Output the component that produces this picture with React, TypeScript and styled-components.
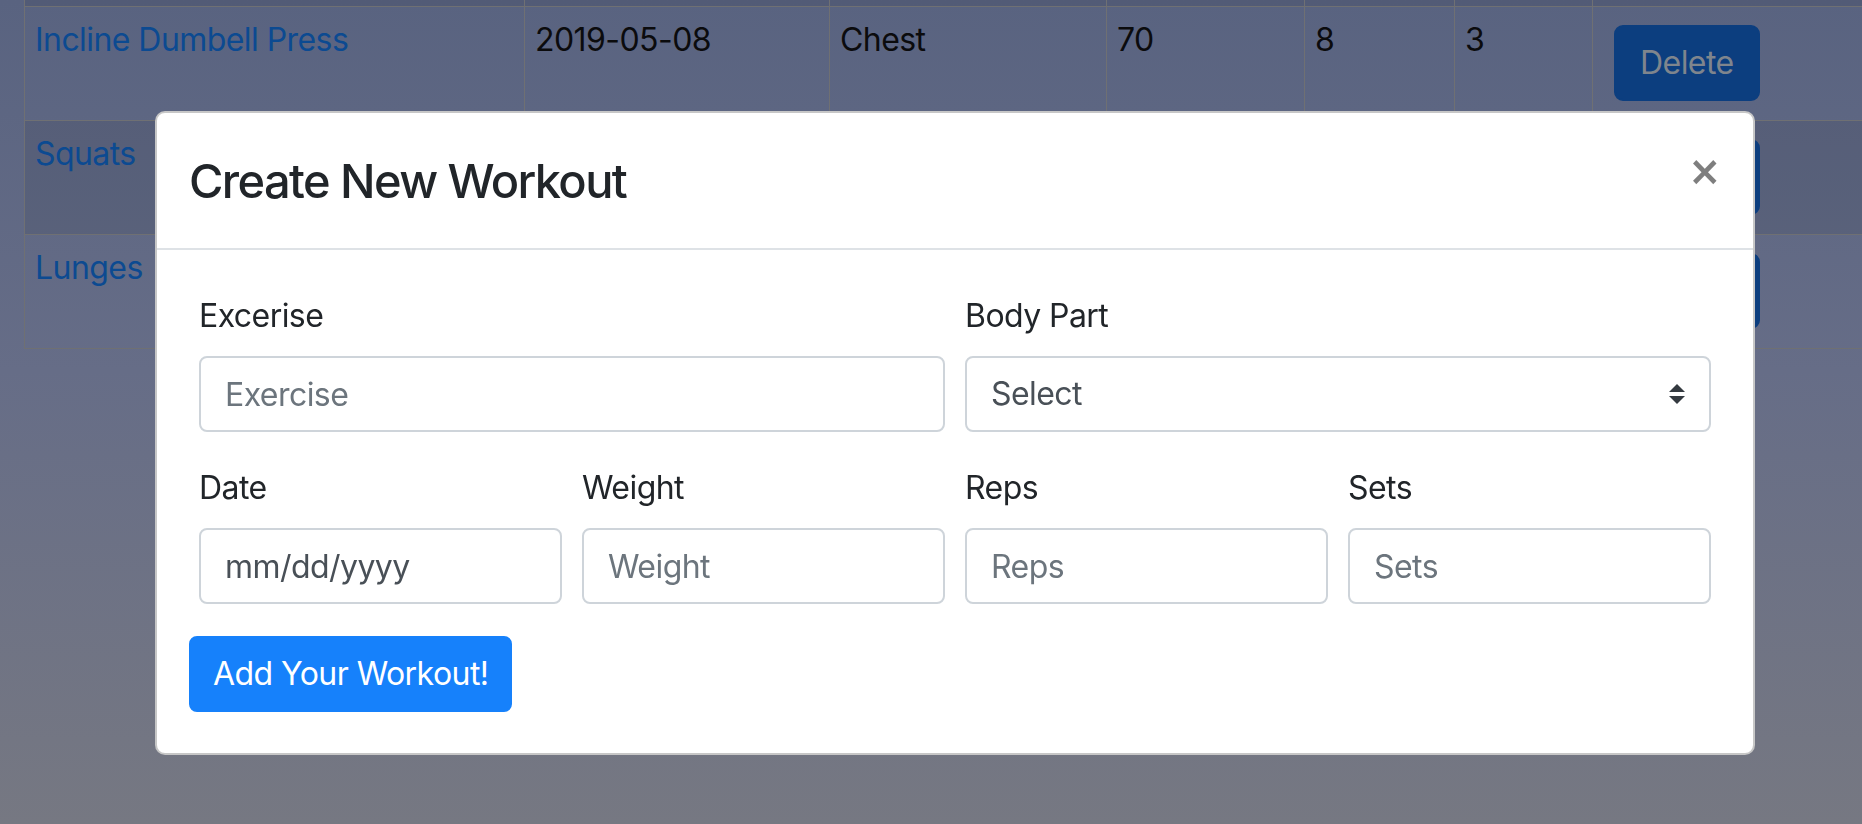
import React, { useLayoutEffect, useRef } from "react";
import styled, { createGlobalStyle } from "styled-components";

const GlobalStyle = createGlobalStyle`
  html, body { margin: 0; padding: 0; overflow: hidden; }
  body { font-family: Inter, "Noto Sans", "Liberation Sans", sans-serif; letter-spacing: -0.035em; }
  * { box-sizing: border-box; }
  input, select, button { letter-spacing: inherit; }
`;

const Viewport = styled.div`
  width: 100vw;
  height: 100vh;
  overflow: hidden;
  background: linear-gradient(to bottom, #596380 0%, #666d87 45%, #767882 100%);
  padding: 0 0 480px 24px;
`;

const Table = styled.table`
  border-collapse: collapse;
  table-layout: fixed;
  width: 1960px;
  font-size: 32px;
  line-height: 48px;
  color: #0b0b0d;
`;

const Col = styled.col<{ $w: number }>`
  width: ${(p) => p.$w}px;
`;

const Row = styled.tr<{ $striped?: boolean }>`
  background: ${(p) => (p.$striped ? "rgba(0, 0, 0, 0.075)" : "transparent")};
`;

const HeadCell = styled.th`
  border: 1px solid #6f7073;
  padding: 9px 10px;
  text-align: left;
  font-weight: 700;
  vertical-align: top;
`;

const Cell = styled.td<{ $action?: boolean }>`
  border: 1px solid #6f7073;
  padding: ${(p) => (p.$action ? "9px 0 9px 10px" : "9px 10px")};
  vertical-align: top;
  white-space: nowrap;
`;

const NameLink = styled.a`
  color: #0c4a91;
  text-decoration: none;
`;

const DeleteButton = styled.button`
  display: block;
  margin: 9px 11px 10px 11px;
  height: 76px;
  padding: 12px 24px;
  border: 2px solid #0c3e7f;
  border-radius: 9px;
  background: #0c3e7f;
  color: #7f858d;
  font-family: inherit;
  font-size: 32px;
  line-height: 48px;
`;

const Modal = styled.div`
  position: fixed;
  top: 111px;
  left: 155px;
  width: 1600px;
  background: #fff;
  border: 2px solid rgba(0, 0, 0, 0.22);
  border-radius: 10px;
  color: #212529;
`;

const ModalHeader = styled.div`
  display: flex;
  align-items: flex-start;
  justify-content: space-between;
  padding: 32px 32px 31px;
  border-bottom: 2px solid #dee2e6;
`;

const ModalTitle = styled.h4`
  margin: 0;
  font-size: 47px;
  line-height: 72px;
  font-weight: 500;
  letter-spacing: -1.6px;
`;

const CloseButton = styled.button`
  margin: -32px -32px -32px auto;
  padding: 36px 32px 32px 32px;
  background: transparent;
  border: 0;
  font-family: "DejaVu Sans", Inter, sans-serif;
  font-size: 40px;
  font-weight: 700;
  line-height: 44px;
  color: #000;
  opacity: 0.5;
`;

const ModalBody = styled.div`
  padding: 42px 32px 41px;
`;

const Form = styled.form`
  display: flex;
  flex-direction: column;
`;

const FormRow = styled.div`
  display: flex;
`;

const FormCol = styled.div`
  flex: 1 1 0;
  min-width: 0;
  padding: 0 10px;
  margin-bottom: 32px;
`;

const Label = styled.label`
  display: block;
  font-size: 32px;
  line-height: 48px;
  margin-bottom: 16px;
  color: #212529;
`;

const Input = styled.input<{ $filled?: boolean }>`
  display: block;
  width: 100%;
  height: 76px;
  padding: 12px 24px;
  border: 2px solid #ced4da;
  border-radius: 8px;
  font-family: inherit;
  font-size: 32px;
  line-height: 48px;
  color: #495057;
  background: #fff;
  outline: none;
  &::placeholder {
    color: ${(p) => (p.$filled ? "#495057" : "#6c757d")};
    opacity: 1;
  }
`;

const SelectWrap = styled.div`
  position: relative;
`;

const Select = styled.select`
  display: block;
  width: 100%;
  height: 76px;
  padding: 12px 24px;
  border: 2px solid #ced4da;
  border-radius: 8px;
  font-family: inherit;
  font-size: 32px;
  line-height: 48px;
  color: #495057;
  background: #fff;
  appearance: none;
  outline: none;
`;

const SelectArrow = styled.svg`
  position: absolute;
  right: 26px;
  top: 50%;
  transform: translateY(-50%);
  pointer-events: none;
`;

const SubmitButton = styled.button`
  align-self: flex-start;
  height: 76px;
  padding: 12px 22px;
  border: 2px solid #1681fb;
  border-radius: 8px;
  background: #1681fb;
  color: #fff;
  font-family: inherit;
  font-size: 32px;
  line-height: 48px;
`;

type Workout = {
  name: string;
  date: string;
  part: string;
  weight: number;
  reps: number;
  sets: number;
};

const workouts: Workout[] = [
  { name: "Bench Press", date: "2019-05-07", part: "Chest", weight: 135, reps: 10, sets: 3 },
  { name: "Incline Dumbell Press", date: "2019-05-08", part: "Chest", weight: 70, reps: 8, sets: 3 },
  { name: "Squats", date: "2019-05-08", part: "Legs", weight: 185, reps: 8, sets: 3 },
  { name: "Lunges", date: "2019-05-08", part: "Legs", weight: 40, reps: 10, sets: 3 },
];

const widths = [500, 305, 277, 198, 150, 138, 392];

export default function App() {
  const viewRef = useRef<HTMLDivElement>(null);
  const rowRef = useRef<HTMLTableRowElement>(null);

  useLayoutEffect(() => {
    const v = viewRef.current;
    const r = rowRef.current;
    if (v && r) {
      const top = r.getBoundingClientRect().top - v.getBoundingClientRect().top + v.scrollTop;
      v.scrollTop = top - 7;
    }
  }, []);

  return (
    <>
      <GlobalStyle />
      <Viewport ref={viewRef}>
        <Table>
          <colgroup>
            {widths.map((w, i) => (
              <Col key={i} $w={w} />
            ))}
          </colgroup>
          <thead>
            <tr>
              <HeadCell>Exercise</HeadCell>
              <HeadCell>Date</HeadCell>
              <HeadCell>Body Part</HeadCell>
              <HeadCell>Weight</HeadCell>
              <HeadCell>Reps</HeadCell>
              <HeadCell>Sets</HeadCell>
              <HeadCell></HeadCell>
            </tr>
          </thead>
          <tbody>
            {workouts.map((w, i) => (
              <Row key={w.name} $striped={i % 2 === 0} ref={i === 1 ? rowRef : undefined}>
                <Cell>
                  <NameLink href="#">{w.name}</NameLink>
                </Cell>
                <Cell>{w.date}</Cell>
                <Cell>{w.part}</Cell>
                <Cell>{w.weight}</Cell>
                <Cell>{w.reps}</Cell>
                <Cell>{w.sets}</Cell>
                <Cell $action>
                  <DeleteButton type="button">Delete</DeleteButton>
                </Cell>
              </Row>
            ))}
          </tbody>
        </Table>

        <Modal role="dialog">
          <ModalHeader>
            <ModalTitle>Create New Workout</ModalTitle>
            <CloseButton type="button" aria-label="Close">
              ×
            </CloseButton>
          </ModalHeader>
          <ModalBody>
            <Form onSubmit={(e) => e.preventDefault()}>
              <FormRow>
                <FormCol>
                  <Label>Excerise</Label>
                  <Input placeholder="Exercise" />
                </FormCol>
                <FormCol>
                  <Label>Body Part</Label>
                  <SelectWrap>
                    <Select defaultValue="">
                      <option value="">Select</option>
                      <option>Chest</option>
                      <option>Back</option>
                      <option>Legs</option>
                      <option>Arms</option>
                      <option>Shoulders</option>
                    </Select>
                    <SelectArrow width="16" height="20" viewBox="0 0 16 20">
                      <polygon points="0,8 8,0 16,8" fill="#343a40" />
                      <polygon points="0,12 16,12 8,20" fill="#343a40" />
                    </SelectArrow>
                  </SelectWrap>
                </FormCol>
              </FormRow>
              <FormRow>
                <FormCol>
                  <Label>Date</Label>
                  <Input placeholder="mm/dd/yyyy" $filled />
                </FormCol>
                <FormCol>
                  <Label>Weight</Label>
                  <Input placeholder="Weight" />
                </FormCol>
                <FormCol>
                  <Label>Reps</Label>
                  <Input placeholder="Reps" />
                </FormCol>
                <FormCol>
                  <Label>Sets</Label>
                  <Input placeholder="Sets" />
                </FormCol>
              </FormRow>
              <SubmitButton type="submit">Add Your Workout!</SubmitButton>
            </Form>
          </ModalBody>
        </Modal>
      </Viewport>
    </>
  );
}
